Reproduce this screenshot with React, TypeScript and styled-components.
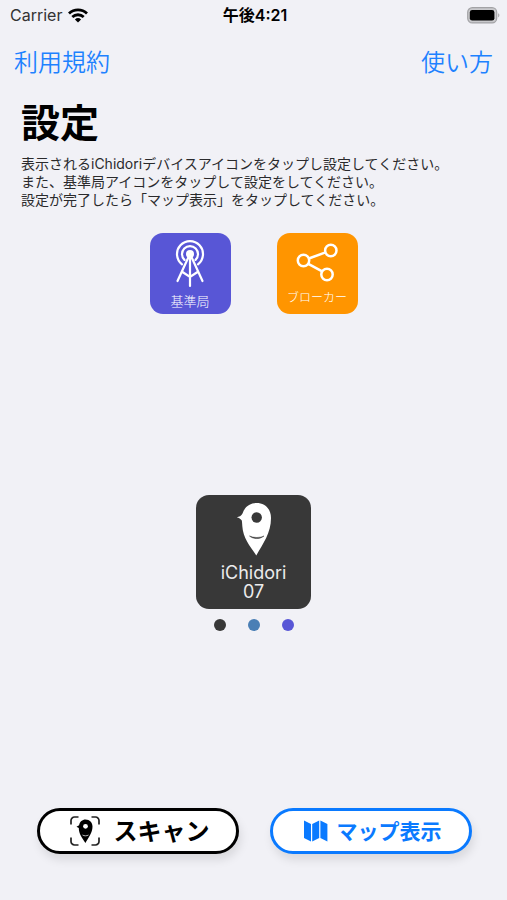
import React from "react";
import styled, { createGlobalStyle } from "styled-components";

const GlobalStyle = createGlobalStyle`
  * { box-sizing: border-box; }
  body {
    margin: 0;
    background: #f1f1f6;
    color: #000;
    font-family: Inter, "Noto Sans CJK JP", sans-serif;
  }
`;

const Screen = styled.div`
  min-height: 100vh;
  display: flex;
  flex-direction: column;
`;

const StatusBar = styled.div`
  display: grid;
  grid-template-columns: 1fr auto 1fr;
  align-items: center;
  height: 30px;
  padding: 0 7px 0 10px;
  font-size: 16px;
  line-height: 20px;
`;

const Carrier = styled.span`
  display: flex;
  align-items: center;
  gap: 6px;
  color: #333;
`;

const Clock = styled.time`
  font-size: 16px;
  font-weight: 600;
`;

const BatterySlot = styled.span`
  display: flex;
  justify-content: flex-end;
`;

const Nav = styled.nav`
  display: flex;
  justify-content: space-between;
  padding: 16px 14px 0;
`;

const NavLink = styled.a`
  font-size: 24px;
  line-height: 34px;
  font-weight: 350;
  color: #1e82ff;
  text-decoration: none;
`;

const Intro = styled.header`
  padding: 19px 21px 0;
`;

const Title = styled.h1`
  margin: 0;
  font-size: 39px;
  line-height: 48px;
  font-weight: 700;
`;

const Description = styled.p`
  margin: 8px 0 0;
  font-size: 14px;
  line-height: 18px;
  color: #2a2a2c;
`;

const Tiles = styled.div`
  display: flex;
  justify-content: center;
  gap: 46px;
  padding-top: 24px;
`;

const Tile = styled.button<{ $color: string }>`
  display: flex;
  flex-direction: column;
  align-items: center;
  width: 81px;
  height: 81px;
  padding: 6px 0 0;
  border: 0;
  border-radius: 13px;
  background: ${(p) => p.$color};
  color: #fff;
  font-family: inherit;
  white-space: nowrap;
`;

const TileLabel = styled.span<{ $size: number }>`
  font-size: ${(p) => p.$size}px;
  line-height: 20px;
  font-weight: 300;
`;

const Devices = styled.main`
  flex: 1;
  display: flex;
  flex-direction: column;
  align-items: center;
  justify-content: center;
  gap: 10px;
  padding: 28px 0 24px;
`;

const DeviceCard = styled.button`
  display: flex;
  flex-direction: column;
  align-items: center;
  gap: 7px;
  width: 115px;
  padding: 7px 0 8px;
  border: 0;
  border-radius: 13px;
  background: #383838;
  color: #ececec;
  font-family: inherit;
  font-size: 18px;
  line-height: 19px;
`;

const DeviceName = styled.span`
  display: flex;
  flex-direction: column;
`;

const Dots = styled.div`
  display: flex;
  gap: 22px;
`;

const Dot = styled.span<{ $color: string }>`
  width: 12px;
  height: 12px;
  border-radius: 50%;
  background: ${(p) => p.$color};
`;

const Footer = styled.footer`
  display: flex;
  gap: 31px;
  padding: 0 35px 46px 37px;
`;

const PillButton = styled.button<{ $color: string; $gap: number }>`
  flex: 1;
  display: flex;
  align-items: center;
  justify-content: center;
  gap: ${(p) => p.$gap}px;
  height: 46px;
  padding: 0 0 0 3px;
  border: 3px solid ${(p) => p.$color};
  border-radius: 23px;
  background: #fff;
  color: ${(p) => p.$color};
  font-family: inherit;
  font-weight: 700;
  white-space: nowrap;
  box-shadow: 2px 6px 10px rgba(0, 0, 0, 0.1);
`;

const PillLabel = styled.span<{ $size: number }>`
  padding-top: 2px;
  font-size: ${(p) => p.$size}px;
  line-height: 32px;
`;

const WifiIcon = () => (
  <svg width="20" height="15" viewBox="0 0 20 15" fill="none" stroke="#000" strokeWidth="2.8" aria-hidden="true">
    <path d="M1 5.5a13 13 0 0 1 18 0" />
    <path d="M4.3 9a8.3 8.3 0 0 1 11.4 0" />
    <path d="M10 14.6 6.9 11.5a4.5 4.5 0 0 1 6.2 0z" fill="#000" stroke="none" />
  </svg>
);

const BatteryIcon = () => (
  <svg width="33" height="17" viewBox="0 0 33 17" aria-hidden="true">
    <rect x="0.7" y="0.7" width="29" height="15.2" rx="4.6" fill="#c9c9cc" stroke="#a3a3a6" strokeWidth="1.2" />
    <rect x="2.8" y="3" width="24.6" height="10.6" rx="2.4" fill="#000" />
    <path d="M31.2 6.2c1.6.7 1.6 3.5 0 4.2z" fill="#a3a3a6" />
  </svg>
);

const AntennaIcon = () => (
  <svg width="32" height="52" viewBox="0 0 32 52" fill="none" stroke="#fff" strokeWidth="2.2" strokeLinecap="round" aria-hidden="true">
    <path d="M8 25.3a13 13 0 1 1 16 0" />
    <path d="M10.5 20.9a8 8 0 1 1 11 0" />
    <circle cx="16" cy="15" r="4" fill="#fff" stroke="none" />
    <path d="M15 17 3.500 42M17 17 28.500 42M16 17v30M8.500 33 16 38l7.500-5" />
  </svg>
);

const ShareIcon = () => (
  <svg width="42" height="49" viewBox="0 0 42 49" fill="none" stroke="#fff" strokeWidth="2.5" aria-hidden="true">
    <circle cx="7.5" cy="21.5" r="5.7" />
    <circle cx="34.8" cy="11.5" r="5.7" />
    <circle cx="31" cy="35.5" r="5.7" />
    <path d="M12.8 19.5 29.5 13.4M12.3 24.8 26.2 32.4" />
  </svg>
);

const BirdPinIcon = () => (
  <svg width="36" height="54" viewBox="0 0 36 54" aria-hidden="true">
    <path
      d="M20.5 1C29 1 35 7 35 16c0 15-8 25.500-14.700 37.500C14 44 7 36 6.300 24c-.1-2.800-.3-4-.5-5.500C4.800 17 3 16 .8 15.300 3 14.800 5.400 14 6.500 11.500 8.500 5 14 1 20.500 1z"
      fill="#fff"
    />
    <circle cx="20.7" cy="15.5" r="5.2" fill="#383838" />
    <path d="M13.500 34c4 3.400 10.500 3.400 14.500 0-4 2-10.500 2-14.500 0z" fill="#383838" stroke="#383838" strokeWidth="0.5" />
  </svg>
);

const ScanIcon = () => (
  <svg width="30" height="30" viewBox="0 0 30 30" aria-hidden="true">
    <path
      d="M1 8.500V4.500A3.500 3.500 0 0 1 4.500 1h4M21.500 1h4A3.500 3.500 0 0 1 29 4.500v4M29 21.500v4a3.500 3.500 0 0 1-3.500 3.500h-4M8.500 29h-4A3.500 3.500 0 0 1 1 25.500v-4"
      fill="none"
      stroke="#222"
      strokeWidth="1.7"
    />
    <path d="M15.500 3.500c4.200 0 7 2.900 7 7 0 6.200-4 11-7.100 16.500-3-4.900-6.600-8.800-6.600-15L6.500 10.700l2.600-1.500C9.800 5.700 12.300 3.500 15.500 3.500z" fill="#000" />
    <circle cx="15.500" cy="10.300" r="2.400" fill="#fff" />
    <path d="M12.500 19c1.800 1.100 4.200 1.100 6 0" fill="none" stroke="#fff" strokeWidth="0.7" />
  </svg>
);

const MapIcon = () => (
  <svg width="24" height="22" viewBox="0 0 24 22" fill="currentColor" aria-hidden="true">
    <path d="M0 .5 7 4v17.500L0 18zM8.200 4l7-3.500V18l-7 3.500zM16.400.5l7 3.500v17.500l-7-3.500z" />
  </svg>
);

export default function App() {
  return (
    <Screen lang="ja">
      <GlobalStyle />
      <StatusBar>
        <Carrier>
          Carrier
          <WifiIcon />
        </Carrier>
        <Clock>午後4:21</Clock>
        <BatterySlot>
          <BatteryIcon />
        </BatterySlot>
      </StatusBar>
      <Nav>
        <NavLink href="#terms">利用規約</NavLink>
        <NavLink href="#usage">使い方</NavLink>
      </Nav>
      <Intro>
        <Title>設定</Title>
        <Description>
          表示されるiChidoriデバイスアイコンをタップし設定してください。
          <br />
          また、基準局アイコンをタップして設定をしてください。
          <br />
          設定が完了したら「マップ表示」をタップしてください。
        </Description>
      </Intro>
      <Tiles>
        <Tile type="button" $color="#5856d6">
          <AntennaIcon />
          <TileLabel $size={13}>基準局</TileLabel>
        </Tile>
        <Tile type="button" $color="#ff9500">
          <ShareIcon />
          <TileLabel $size={12}>ブローカー</TileLabel>
        </Tile>
      </Tiles>
      <Devices>
        <DeviceCard type="button">
          <BirdPinIcon />
          <DeviceName>
            <span>iChidori</span>
            <span>07</span>
          </DeviceName>
        </DeviceCard>
        <Dots>
          <Dot $color="#383838" />
          <Dot $color="#4a7fb5" />
          <Dot $color="#5856d6" />
        </Dots>
      </Devices>
      <Footer>
        <PillButton type="button" $color="#000" $gap={14}>
          <ScanIcon />
          <PillLabel $size={24}>スキャン</PillLabel>
        </PillButton>
        <PillButton type="button" $color="#0a7aff" $gap={9}>
          <MapIcon />
          <PillLabel $size={21}>マップ表示</PillLabel>
        </PillButton>
      </Footer>
    </Screen>
  );
}
